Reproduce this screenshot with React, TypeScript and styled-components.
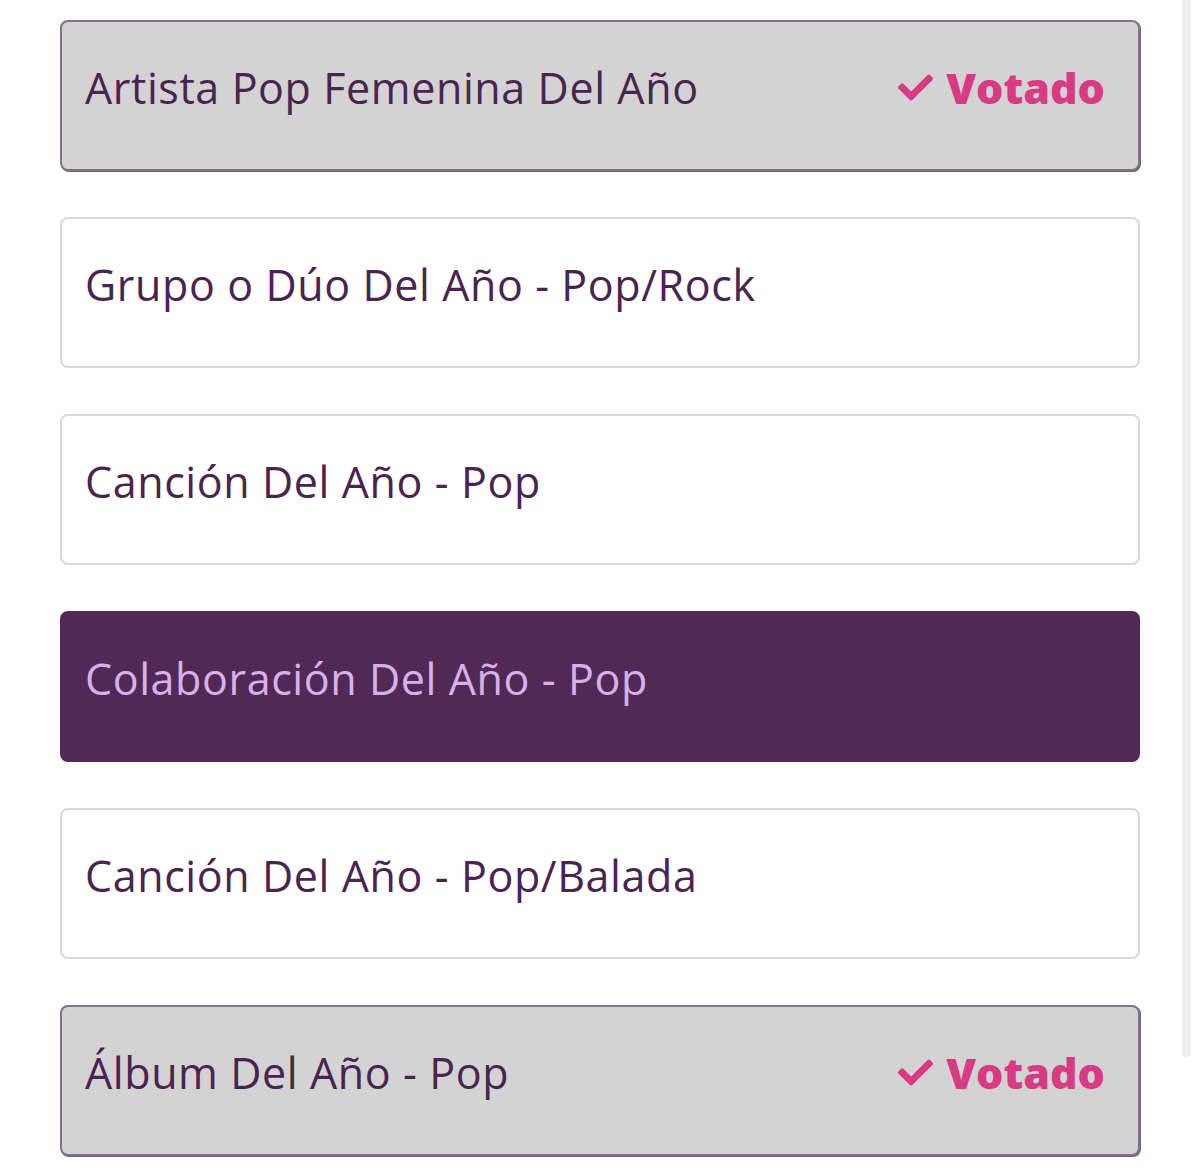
import React from "react";
import styled, { createGlobalStyle } from "styled-components";
import { FaCheck } from "react-icons/fa";

const Global = createGlobalStyle`
  html, body { margin: 0; padding: 0; background: #ffffff; }
  body { font-family: "Open Sans", "Noto Sans", sans-serif; }
`;

const Page = styled.div`
  display: flex;
  align-items: flex-start;
  width: 1200px;
  height: 1173px;
  overflow: hidden;
`;

const List = styled.div`
  display: flex;
  flex-direction: column;
  gap: 46px;
  width: 1080px;
  padding: 20px 0 0 60px;
`;

const Track = styled.div`
  width: 9px;
  height: 1057px;
  margin-left: 42px;
  background: #eeeeee;
  border-radius: 0 0 4px 4px;
`;

type Variant = "voted" | "plain" | "active";

const Card = styled.div<{ $variant: Variant }>`
  box-sizing: border-box;
  height: 151px;
  display: flex;
  align-items: center;
  justify-content: space-between;
  padding: 0 33px 16px 23px;
  border-radius: 8px;
  border: 2px solid
    ${(p) =>
      p.$variant === "voted" ? "#85728a" : p.$variant === "active" ? "#502a55" : "#d9d9d9"};
  background: ${(p) =>
    p.$variant === "voted" ? "#d3d3d3" : p.$variant === "active" ? "#502a55" : "#ffffff"};
  box-shadow: ${(p) => (p.$variant === "voted" ? "1px 1px 0 #6f6074" : "none")};
`;

const Title = styled.span<{ $variant: Variant }>`
  font-size: 43px;
  font-weight: 400;
  letter-spacing: 0.6px;
  color: ${(p) => (p.$variant === "active" ? "#d8b0ea" : "#4a2450")};
`;

const Voted = styled.span`
  display: flex;
  align-items: center;
  gap: 13px;
  color: #d83b84;
  font-size: 43px;
  font-weight: 800;
  svg {
    width: 35px;
    height: 35px;
  }
`;

const items: { label: string; variant: Variant }[] = [
  { label: "Artista Pop Femenina Del Año", variant: "voted" },
  { label: "Grupo o Dúo Del Año - Pop/Rock", variant: "plain" },
  { label: "Canción Del Año - Pop", variant: "plain" },
  { label: "Colaboración Del Año - Pop", variant: "active" },
  { label: "Canción Del Año - Pop/Balada", variant: "plain" },
  { label: "Álbum Del Año - Pop", variant: "voted" },
];

export default function App() {
  return (
    <>
      <Global />
      <Page>
        <List>
          {items.map((it) => (
            <Card key={it.label} $variant={it.variant}>
              <Title $variant={it.variant}>{it.label}</Title>
              {it.variant === "voted" && (
                <Voted>
                  <FaCheck />
                  Votado
                </Voted>
              )}
            </Card>
          ))}
        </List>
        <Track />
      </Page>
    </>
  );
}
